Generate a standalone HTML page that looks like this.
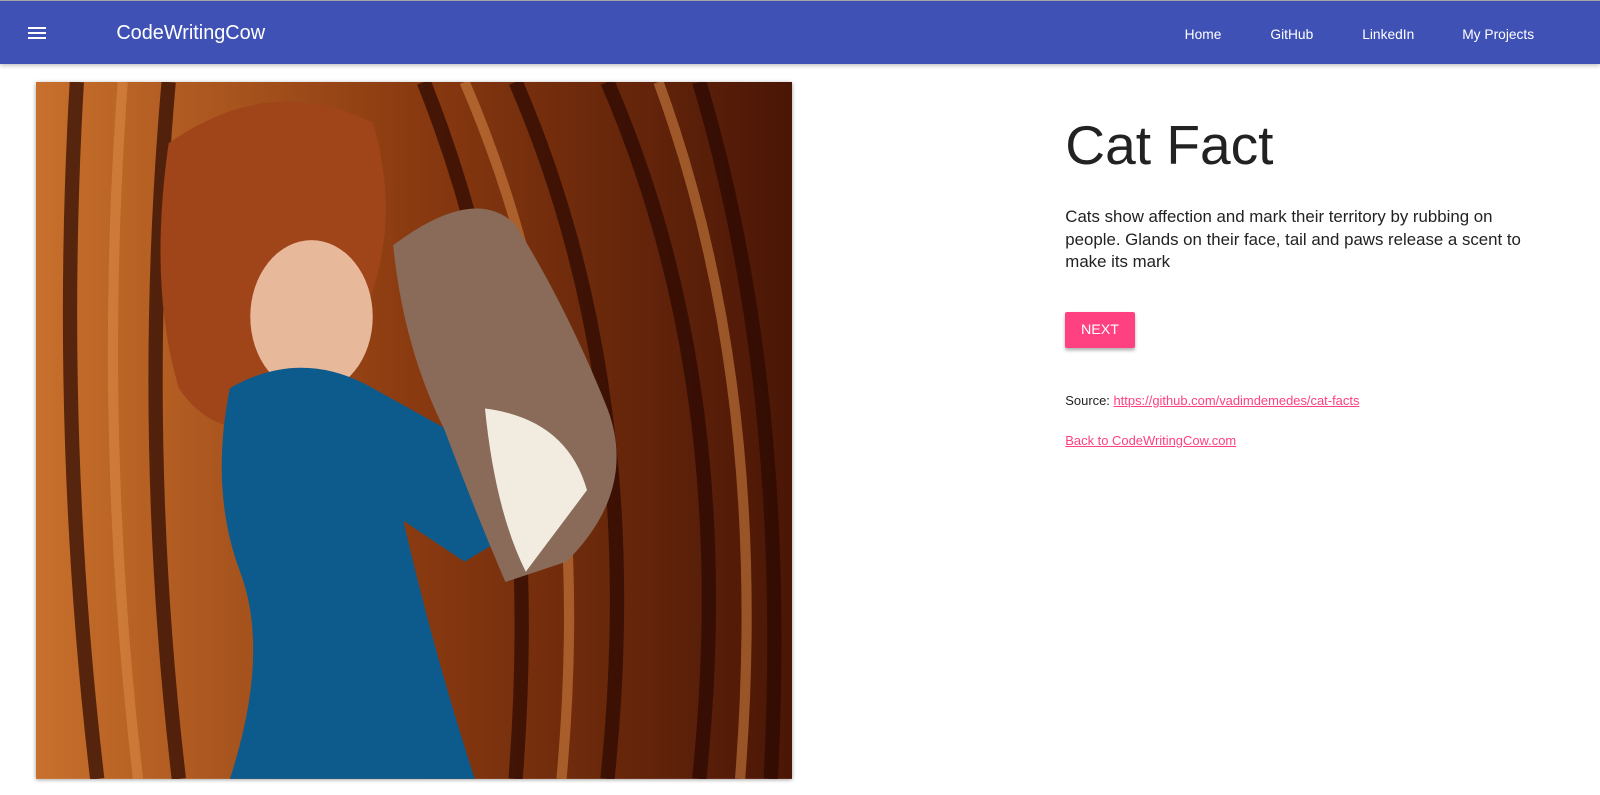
<!DOCTYPE html>
<html><head><meta charset="utf-8"><style>
html{margin:0;padding:0;background:#fff;overflow:hidden}
body{margin:0;padding:0;background:#fff;width:1568px;height:779px;overflow:hidden;font-family:"Liberation Sans",Arial,sans-serif;zoom:1.0204;position:relative}
.top{height:1px;background:#aaa}
.nav{height:62px;background:#3f51b5;position:relative;color:#fff;box-shadow:0 2px 4px rgba(0,0,0,.25)}
.ham{position:absolute;left:27px;top:25px;width:18px}
.ham i{display:block;height:2px;background:#fff;margin-bottom:3px}
.brand{position:absolute;left:114px;top:21px;font-size:19.5px}
.links{position:absolute;top:25px;font-size:13.5px}
.img{position:absolute;left:35px;top:80px;width:741px;height:683px;box-shadow:0 1px 4px rgba(0,0,0,.4);overflow:hidden}
h1{position:absolute;left:1044px;top:111px;margin:0;font-weight:400;font-size:54px;color:#222}
.p{position:absolute;left:1044px;top:202px;width:468px;font-size:16.5px;line-height:22px;color:#222}
.btn{position:absolute;left:1044px;top:306px;width:68px;height:35px;background:#ff4081;color:#fff;font-size:14px;text-align:center;line-height:36px;border-radius:2px;box-shadow:0 2px 3px rgba(0,0,0,.3)}
.s{position:absolute;left:1044px;font-size:12.7px;color:#222}
a{color:#ff4081;text-decoration:underline}
</style></head><body>
<div class="top"></div>
<div class="nav"><div class="ham"><i></i><i></i><i></i></div><div class="brand">CodeWritingCow</div>
<span class="links" style="left:1161px">Home</span><span class="links" style="left:1245px">GitHub</span><span class="links" style="left:1335px">LinkedIn</span><span class="links" style="left:1433px">My Projects</span></div>
<div class="img"><svg width="741" height="683" viewBox="0 0 741 683">
<defs><linearGradient id="w" x1="0" x2="1"><stop offset="0" stop-color="#c8702c"/><stop offset=".5" stop-color="#8a3a10"/><stop offset="1" stop-color="#4a1606"/></linearGradient></defs>
<rect width="741" height="683" fill="url(#w)"/>
<g fill="none" stroke="#2a0802" stroke-width="14" opacity=".7">
<path d="M40 0 Q20 340 60 683"/><path d="M130 0 Q100 340 140 683"/><path d="M380 0 Q500 300 470 683"/><path d="M470 0 Q600 300 560 683"/><path d="M560 0 Q690 300 650 683"/><path d="M650 0 Q740 300 720 683"/></g>
<g fill="none" stroke="#e0904a" stroke-width="10" opacity=".5">
<path d="M85 0 Q60 340 100 683"/><path d="M420 0 Q550 300 515 683"/><path d="M610 0 Q720 300 690 683"/></g>
<path d="M130 60 Q230 -10 330 40 Q360 140 320 230 L260 330 Q180 360 140 300 Q110 200 130 60Z" fill="#a0451a"/>
<ellipse cx="270" cy="230" rx="60" ry="75" fill="#e8b89a"/>
<path d="M190 300 Q260 260 330 300 L420 350 Q470 380 470 440 L420 470 L360 430 Q390 560 430 683 L190 683 Q230 560 200 480 Q170 400 190 300Z" fill="#0d5a8c"/>
<path d="M350 160 Q430 100 470 140 Q520 220 560 320 Q590 400 520 470 L460 490 Q430 420 400 340 Q360 260 350 160Z" fill="#8a6a58"/>
<path d="M440 320 Q520 330 540 400 L480 480 Q450 420 440 320Z" fill="#f2ece0"/>
</svg></div>
<h1>Cat Fact</h1>
<div class="p">Cats show affection and mark their territory by rubbing on people. Glands on their face, tail and paws release a scent to make its mark</div>
<div class="btn">NEXT</div>
<div class="s" style="top:385px">Source: <a>https://github.com/vadimdemedes/cat-facts</a></div>
<div class="s" style="top:424px"><a>Back to CodeWritingCow.com</a></div>
</body></html>
